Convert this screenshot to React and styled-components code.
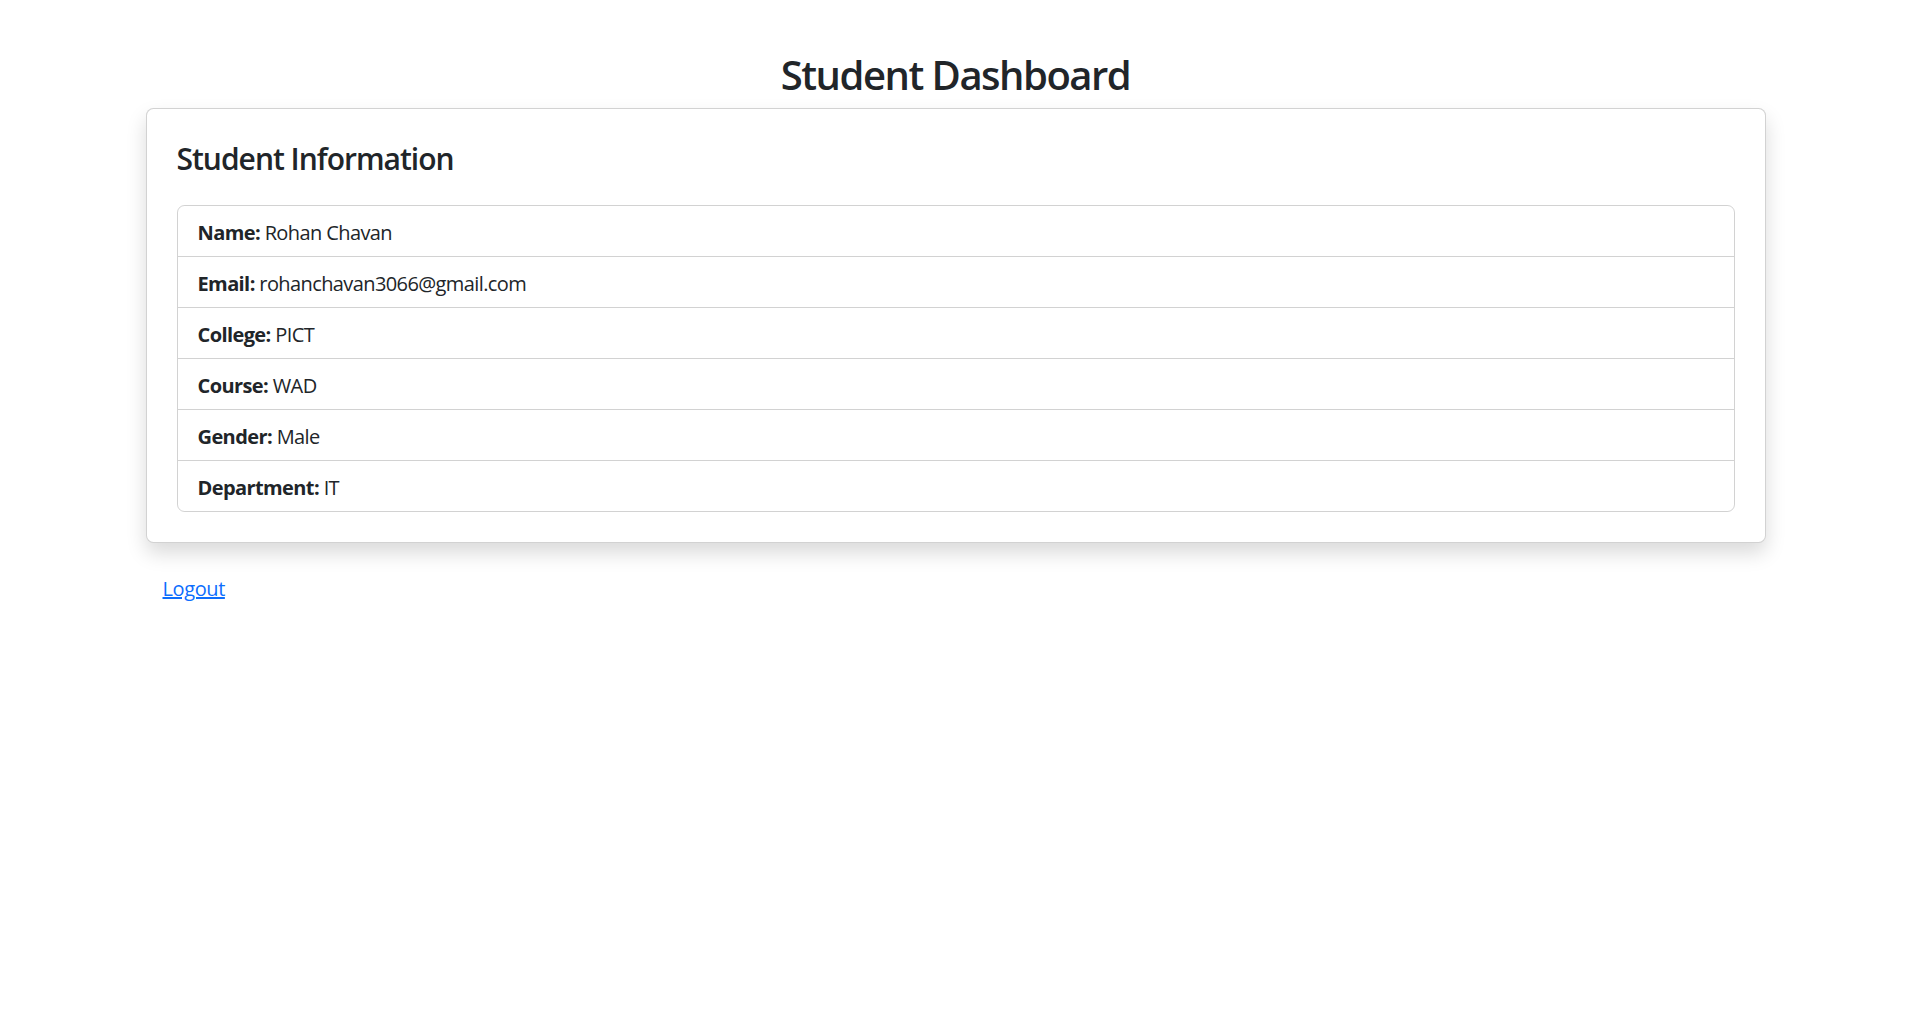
import React from "react";
import styled, { createGlobalStyle } from "styled-components";

const Global = createGlobalStyle`
  html, body {
    margin: 0;
    padding: 0;
    background: #ffffff;
  }
  body {
    font-family: "Open Sans", "Noto Sans", Arial, sans-serif;
    font-size: 20px;
    line-height: 1.5;
    color: #212529;
    -webkit-font-smoothing: antialiased;
  }
  * { box-sizing: border-box; }
`;

const Container = styled.main`
  width: 100%;
  max-width: 1650px;
  margin: 0 auto;
  padding: 51px 17px 0 13px;
`;

const PageTitle = styled.h1`
  margin: 0 0 9px;
  text-align: center;
  font-size: 40px;
  font-weight: 600;
  line-height: 1.2;
  letter-spacing: -1.5px;
  color: #212529;
`;

const Card = styled.section`
  background: #fff;
  border: 1px solid rgba(0, 0, 0, 0.175);
  border-radius: 7.5px;
  box-shadow: 0 10px 20px rgba(0, 0, 0, 0.15);
  padding: 30px;
`;

const CardTitle = styled.h2`
  margin: 0 0 28px;
  padding-top: 2px;
  font-size: 30px;
  font-weight: 600;
  line-height: 1.2;
  letter-spacing: -1px;
`;

const List = styled.ul`
  list-style: none;
  margin: 0;
  padding: 0;
  border: 1px solid rgba(0, 0, 0, 0.175);
  border-radius: 7.5px;
  overflow: hidden;
`;

const Item = styled.li`
  padding: 12px 20px 8px;
  line-height: 30px;
  font-size: 20px;
  letter-spacing: -0.6px;
  border-top: ${(p) => (p.$first ? "none" : "1px solid rgba(0, 0, 0, 0.175)")};
`;

const Label = styled.strong`
  font-weight: 700;
`;

const LogoutLink = styled.a`
  display: inline-block;
  margin-top: 22px;
  padding: 8px 15px 7px 16px;
  border: 1px solid transparent;
  font-size: 20px;
  line-height: 30px;
  letter-spacing: -0.4px;
  color: #0d6efd;
  text-decoration: underline;
  cursor: pointer;
`;

const rows = [
  ["Name", "Rohan Chavan"],
  ["Email", "rohanchavan3066@gmail.com"],
  ["College", "PICT"],
  ["Course", "WAD"],
  ["Gender", "Male"],
  ["Department", "IT"],
];

export default function App() {
  return (
    <>
      <Global />
      <Container>
        <PageTitle>Student Dashboard</PageTitle>
        <Card>
          <CardTitle>Student Information</CardTitle>
          <List>
            {rows.map(([k, v], i) => (
              <Item key={k} $first={i === 0}>
                <Label>{k}:</Label> {v}
              </Item>
            ))}
          </List>
        </Card>
        <LogoutLink href="#">Logout</LogoutLink>
      </Container>
    </>
  );
}
